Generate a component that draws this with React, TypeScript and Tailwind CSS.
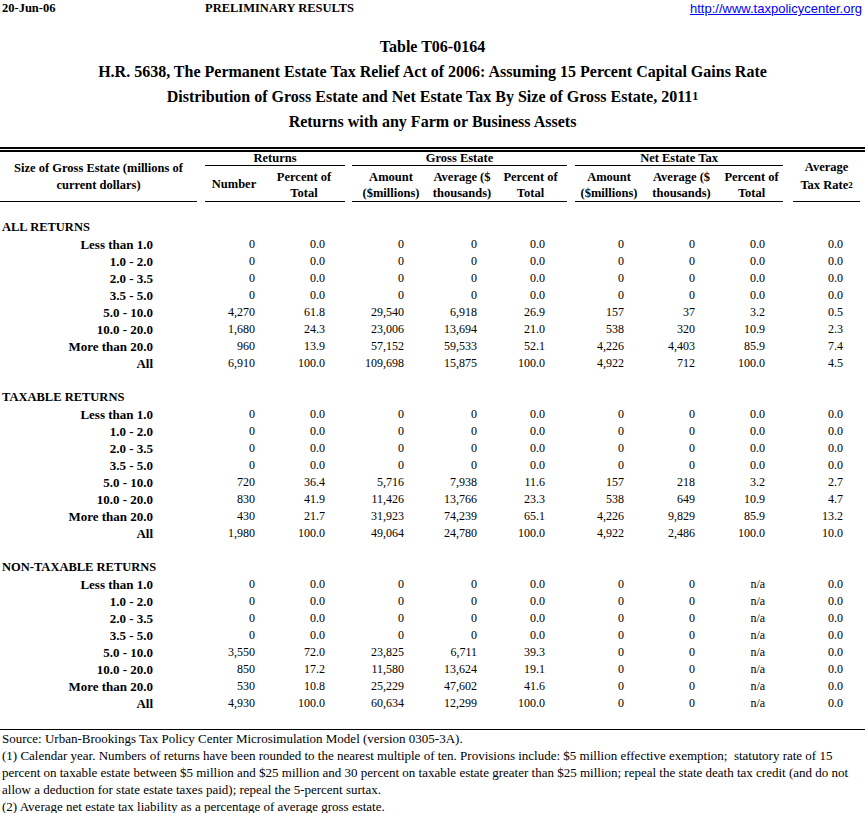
import React from 'react';

type Row = [string, ...string[]];

const zeros = ['0', '0.0', '0', '0', '0.0', '0', '0', '0.0', '0.0'];
const zerosNa = ['0', '0.0', '0', '0', '0.0', '0', '0', 'n/a', '0.0'];
const brackets = ['Less than 1.0', '1.0 - 2.0', '2.0 - 3.5', '3.5 - 5.0'];

const sections: { title: string; rows: Row[] }[] = [
  {
    title: 'ALL RETURNS',
    rows: [
      ...brackets.map((b) => [b, ...zeros] as Row),
      ['5.0 - 10.0', '4,270', '61.8', '29,540', '6,918', '26.9', '157', '37', '3.2', '0.5'],
      ['10.0 - 20.0', '1,680', '24.3', '23,006', '13,694', '21.0', '538', '320', '10.9', '2.3'],
      ['More than 20.0', '960', '13.9', '57,152', '59,533', '52.1', '4,226', '4,403', '85.9', '7.4'],
      ['All', '6,910', '100.0', '109,698', '15,875', '100.0', '4,922', '712', '100.0', '4.5'],
    ],
  },
  {
    title: 'TAXABLE RETURNS',
    rows: [
      ...brackets.map((b) => [b, ...zeros] as Row),
      ['5.0 - 10.0', '720', '36.4', '5,716', '7,938', '11.6', '157', '218', '3.2', '2.7'],
      ['10.0 - 20.0', '830', '41.9', '11,426', '13,766', '23.3', '538', '649', '10.9', '4.7'],
      ['More than 20.0', '430', '21.7', '31,923', '74,239', '65.1', '4,226', '9,829', '85.9', '13.2'],
      ['All', '1,980', '100.0', '49,064', '24,780', '100.0', '4,922', '2,486', '100.0', '10.0'],
    ],
  },
  {
    title: 'NON-TAXABLE RETURNS',
    rows: [
      ...brackets.map((b) => [b, ...zerosNa] as Row),
      ['5.0 - 10.0', '3,550', '72.0', '23,825', '6,711', '39.3', '0', '0', 'n/a', '0.0'],
      ['10.0 - 20.0', '850', '17.2', '11,580', '13,624', '19.1', '0', '0', 'n/a', '0.0'],
      ['More than 20.0', '530', '10.8', '25,229', '47,602', '41.6', '0', '0', 'n/a', '0.0'],
      ['All', '4,930', '100.0', '60,634', '12,299', '100.0', '0', '0', 'n/a', '0.0'],
    ],
  },
];

// right padding per data column, so figures line up like the sheet
const pad = ['pr-[8px]', 'pr-[20px]', 'pr-[26px]', 'pr-[17px]', 'pr-[22px]', 'pr-[19px]', 'pr-[25px]', 'pr-[18px]', 'pr-[17px]'];
// spacer column goes before these data indexes
const gapBefore = [0, 2, 5, 8];

function DataRow({ row }: { row: Row }) {
  const [label, ...vals] = row;
  const cells: React.ReactNode[] = [];
  vals.forEach((v, i) => {
    if (gapBefore.includes(i)) cells.push(<td key={`g${i}`} />);
    cells.push(
      <td key={i} className={`text-right whitespace-nowrap ${pad[i]}`}>
        {v}
      </td>
    );
  });
  return (
    <tr className="h-[17px]">
      <td className="text-right font-bold text-[13px] pr-[44px] whitespace-nowrap">{label}</td>
      {cells}
      <td />
    </tr>
  );
}

function Blank() {
  return (
    <tr className="h-[17px]">
      <td colSpan={15} />
    </tr>
  );
}

export default function App() {
  return (
    <div className="w-[865px] bg-white text-black font-['Liberation_Serif',serif] text-[12px] leading-[17px]">
      <div className="flex h-[17px] items-center">
        <div className="w-[205px] pl-[2px] font-bold text-[12.5px]">20-Jun-06</div>
        <div className="font-bold text-[12.5px]">PRELIMINARY RESULTS</div>
        <a
          href="#"
          className="ml-auto pr-[3px] font-['Liberation_Sans',Arial,sans-serif] text-[13px] text-[#0000ff] underline"
        >
          http://www.taxpolicycenter.org
        </a>
      </div>
      <div className="h-[17px]" />
      <div className="flex flex-col items-center text-[16px] font-bold leading-[25px]">
        <div>Table T06-0164</div>
        <div>H.R. 5638, The Permanent Estate Tax Relief Act of 2006: Assuming 15 Percent Capital Gains Rate</div>
        <div>
          Distribution of Gross Estate and Net Estate Tax By Size of Gross Estate, 2011
          <sup className="text-[12px] relative top-[-2px]">1</sup>
        </div>
        <div>Returns with any Farm or Business Assets</div>
      </div>
      <div className="h-[13px]" />
      <div className="h-[2px] bg-black" />
      <div className="h-[1px]" />
      <div className="h-[2px] bg-black" />

      <table className="table-fixed border-collapse w-[865px]">
        <colgroup>
          <col className="w-[197px]" />
          <col className="w-[8px]" />
          <col className="w-[58px]" />
          <col className="w-[82px]" />
          <col className="w-[7px]" />
          <col className="w-[78px]" />
          <col className="w-[64px]" />
          <col className="w-[73px]" />
          <col className="w-[8px]" />
          <col className="w-[68px]" />
          <col className="w-[77px]" />
          <col className="w-[63px]" />
          <col className="w-[10px]" />
          <col className="w-[67px]" />
          <col className="w-[5px]" />
        </colgroup>
        <thead className="font-bold text-[12.5px]">
          <tr className="h-[13px] leading-[13px]">
            <td rowSpan={2} className="border-b border-black text-center align-middle leading-[17px] pt-[1px] whitespace-nowrap">
              Size of Gross Estate (millions of
              <br />
              current dollars)
            </td>
            <td />
            <td colSpan={2} className="border-b border-black text-center">Returns</td>
            <td />
            <td colSpan={3} className="border-b border-black text-center">Gross Estate</td>
            <td />
            <td colSpan={3} className="border-b border-black text-center">Net Estate Tax</td>
            <td />
            <td rowSpan={2} className="border-b border-black text-center align-middle leading-[18px] pb-[2px] whitespace-nowrap">
              Average
              <br />
              Tax Rate<sup className="text-[9px] relative top-[-1px]">2</sup>
            </td>
            <td />
          </tr>
          <tr className="h-[35px] leading-[16px]">
            <td />
            <td className="border-b border-black text-center align-middle">Number</td>
            <td className="border-b border-black text-center pt-[3px]">Percent of<br />Total</td>
            <td />
            <td className="border-b border-black text-center pt-[3px]">Amount<br />($millions)</td>
            <td className="border-b border-black text-center pt-[3px] whitespace-nowrap">Average ($<br />thousands)</td>
            <td className="border-b border-black text-center pt-[3px]">Percent of<br />Total</td>
            <td />
            <td className="border-b border-black text-center pt-[3px]">Amount<br />($millions)</td>
            <td className="border-b border-black text-center pt-[3px] whitespace-nowrap">Average ($<br />thousands)</td>
            <td className="border-b border-black text-center pt-[3px]">Percent of<br />Total</td>
            <td />
            <td />
          </tr>
        </thead>
        <tbody>
          {sections.map((s) => (
            <React.Fragment key={s.title}>
              <Blank />
              <tr className="h-[17px]">
                <td colSpan={15} className="pl-[2px] font-bold text-[12.5px] whitespace-nowrap">{s.title}</td>
              </tr>
              {s.rows.map((r) => (
                <DataRow key={r[0]} row={r} />
              ))}
            </React.Fragment>
          ))}
          <tr className="h-[17px]">
            <td colSpan={15} />
          </tr>
        </tbody>
      </table>

      <div className="h-[1px] bg-black" />
      <div className="pl-[2px] text-[13px] leading-[17px] whitespace-nowrap">
        <div>Source: Urban-Brookings Tax Policy Center Microsimulation Model (version 0305-3A).</div>
        <div>
          (1) Calendar year. Numbers of returns have been rounded to the nearest multiple of ten. Provisions include: $5 million effective exemption;&nbsp; statutory rate of 15
        </div>
        <div>
          percent on taxable estate between $5 million and $25 million and 30 percent on taxable estate greater than $25 million; repeal the state death tax credit (and do not
        </div>
        <div>allow a deduction for state estate taxes paid); repeal the 5-percent surtax.</div>
        <div>(2) Average net estate tax liability as a percentage of average gross estate.</div>
      </div>
    </div>
  );
}
